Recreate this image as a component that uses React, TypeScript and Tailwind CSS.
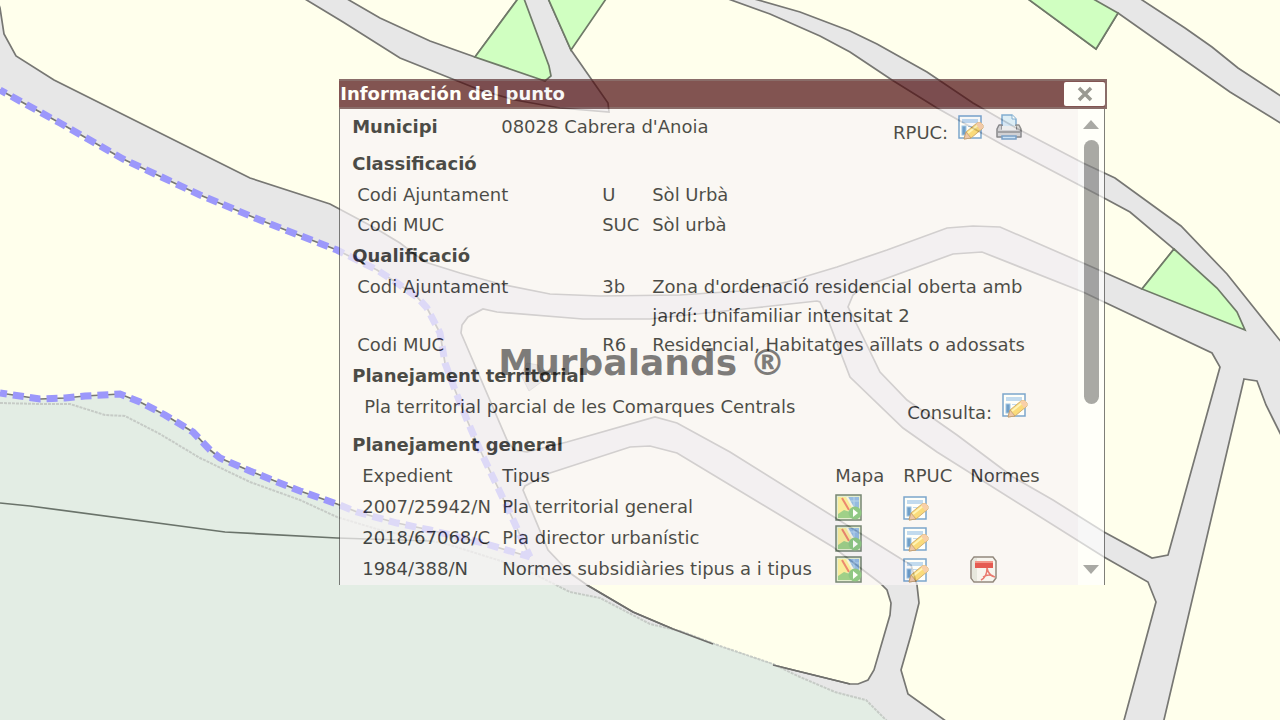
import React from 'react';

const PARCELS = [
  'M-4 -4L0 8L4 34L16 56L54 80L250 178L330 204L375 228L400 243L425 262L460 273L500 284L550 294L600 296L680 295L740 291L787 282L837 267L887 250L947 228L973 226L1000 227L1083 263L1142 289L1174 249L1130 212L1104 198L1083 187L1003 145L937 108L892 80L850 52L820 36L770 14L720 -4H547L571 50L608 103L609 112L560 108L515 100L480 90L430 70L400 58L343 22L300 -4Z',
  'M342 -4L380 18L430 41L475 57L520 -4Z',
  'M744 -4L800 12L850 31L877 44L927 72L973 103L1018 129L1083 163L1115 178L1181 226L1227 274L1282 343V124L1230 92L1118 13L1096 49L1024 -4Z',
  'M1136 -4L1185 28L1212 47L1238 68L1284 98V-4Z',
  'M1104 302L1212 353L1220 367L1168 555L1152 558L1104 532L1053 500L1013 477L957 435L907 400L880 372L863 337L848 307L853 295L863 287L953 254L982 252L1083 292Z',
  'M820 302L827 317L850 377L903 428L937 452L1104 557L1148 582L1156 602L1123 724H950L908 694L901 670L911 635L919 603L917 585L911 565L890 552L730 452L677 423L655 417L567 442L527 452L514 450L507 440L461 333L462 325L468 317L483 309L497 312L583 319L650 319L753 308L817 301Z',
  'M550 473L630 447L650 446L677 453L730 485L833 547L880 583L887 590L891 603L890 615L874 670L868 680L858 684L850 684L773 665L720 647L673 629L633 612L587 585L570 573L548 550L523 490L525 486Z',
  'M1244 379L1257 381L1266 405L1284 441V724H1163Z',
];

const GREENS = [
  'M520 -4L475 57L545 81L551 76L549 66L523 -4Z',
  'M547 -4L571 50L608 -4Z',
  'M1024 -4L1096 49L1118 13L1088 -4Z',
  'M1174 249L1217 288L1237 312L1245 330L1142 289Z',
];

const BOUNDARY_NORTH =
  'M0 90L60 123L123 159L200 195L260 220L337 250L377 270L397 283L417 297L427 308L440 333L445 363L455 390L467 420L480 450L510 513L530 557';
const BOUNDARY_SOUTH =
  'M0 393L40 399L65 398L85 396L120 394L140 402L165 415L193 432L210 450L220 458L250 471L300 491L337 504L357 512L397 523L430 530L483 543L530 557';
const PATH_TRACK =
  'M0 403L40 404L70 404L105 415L125 416L160 434L200 458L250 482L300 500L337 517L380 530L450 545L520 567L570 592L600 598L650 624L680 631L720 646L773 664L800 677L835 692L866 700L888 722';

const MapCanvas: React.FC = () => (
  <svg
    className="absolute inset-0 h-full w-full"
    viewBox="0 0 1280 720"
    preserveAspectRatio="xMidYMid slice"
    aria-hidden="true"
  >
    <rect width="1280" height="720" fill="#e7e7e7" />
    {PARCELS.map(d => (
      <path key={d} d={d} fill="#ffffec" stroke="#777773" strokeWidth="1.7" />
    ))}
    {GREENS.map(d => (
      <path key={d} d={d} fill="#d0ffc1" stroke="#6f7a68" strokeWidth="1.7" />
    ))}
    {/* parcel between the two stretches of municipal boundary */}
    <path d="M0 90L60 123L123 159L200 195L260 220L337 250L377 270L417 297L427 308L440 333L445 363L467 420L480 450L510 513L530 557L483 543L430 530L397 523L337 504L300 491L220 458L193 432L140 402L120 394L40 399L0 393Z" fill="#ffffec" />
    <path
      d="M0 393L40 399L120 394L140 402L193 432L220 458L300 491L337 504L397 523L483 543L520 567L570 592L600 598L650 624L680 631L720 646L773 664L800 677L835 692L866 700L888 722H0Z"
      fill="#e3ede4"
    />
    <path d={PATH_TRACK} fill="none" stroke="#c6cbc6" strokeWidth="2" strokeDasharray="3 1" />
    <path d="M0 503L30 506L225 532L337 538L430 541" fill="none" stroke="#6a736a" strokeWidth="1.7" />
    <path d="M587 585L633 612L673 629L713 644M773 665L850 684" fill="none" stroke="#6f6f6c" strokeWidth="1.7" />
    {[BOUNDARY_NORTH, BOUNDARY_SOUTH].map(d => (
      <g key={d} fill="none">
        <path d={d} stroke="#777773" strokeWidth="1.7" />
        <path d={d} stroke="#9c98fb" strokeWidth="7" strokeDasharray="11 6" strokeDashoffset="4" />
      </g>
    ))}
    <path d="M521 375L529 391L544 380L538 365L527 363Z" fill="#cfcfcb" stroke="#aaa" />
  </svg>
);

const SheetIcon: React.FC = () => (
  <svg className="h-[26px] w-[26px]" viewBox="0 0 26 26" aria-hidden="true">
    <rect x="1" y="2" width="22" height="22" fill="#fff" stroke="#4481bf" strokeWidth="1.5" />
    <rect x="4" y="5" width="16" height="4" fill="#a9cdf0" />
    <rect x="4" y="12" width="4" height="9" fill="#3577b8" stroke="#78aee0" />
    <path d="M10 12.500H19" stroke="#a9cdf0" />
    <path d="M6 25L8 18L19 9Q23 7 25 11V14L13 24Z" fill="#f8cc4a" stroke="#c08f3c" />
    <path d="M10 19L20 11" stroke="#fff0a0" strokeWidth="2" />
    <path d="M19 9Q23 7 25 11V14L22 16L18 10Z" fill="#f7bd8c" />
    <path d="M6 25L8 18L13 24Z" fill="#e9b28a" stroke="#9c6c3c" strokeWidth="0.7" />
  </svg>
);

const PrinterIcon: React.FC = () => (
  <svg className="h-[26px] w-[26px]" viewBox="0 0 26 26" aria-hidden="true">
    <path d="M6 13V1H16L20 5V13Z" fill="#cfe7fa" stroke="#4d8cc5" strokeWidth="1.5" />
    <path d="M16 1V5H20" fill="#fff" stroke="#4d8cc5" />
    <path d="M3 11H6V15H20V11H23L25 15V23H1V15Z" fill="#c9c9cc" stroke="#606065" strokeWidth="1.5" strokeLinejoin="round" />
    <rect x="6" y="12" width="14" height="4" fill="#f0f0f0" />
    <path d="M2 18H24" stroke="#85858a" strokeWidth="2" />
    <path d="M6 22H20V25H6Z" fill="#c0e0fb" stroke="#4b83bb" strokeWidth="1.5" />
  </svg>
);

const MapIcon: React.FC = () => (
  <svg className="h-[27px] w-[27px]" viewBox="0 0 27 27" aria-hidden="true">
    <rect x="1" y="1" width="25" height="25" fill="#d9e8c4" stroke="#3e5440" strokeWidth="1.5" />
    <path d="M3 3H12L17 14L9 19L3 21Z" fill="#f7e578" />
    <path d="M13 3H24V14H18Z" fill="#6b9fdb" />
    <path d="M15 7H24M19 3V13" stroke="#9cc3ea" />
    <path d="M12 3L20 17" stroke="#f3eedc" strokeWidth="2" />
    <path d="M7 4L14 16" stroke="#e5583a" strokeWidth="2" />
    <path d="M3 24V20L9 16L15 18L18 24Z" fill="#79bd5e" />
    <circle cx="20" cy="19" r="6.500" fill="#62b257" />
    <path d="M18 15L23 19L18 23Z" fill="#fff" />
  </svg>
);

const PdfIcon: React.FC = () => (
  <svg className="h-[27px] w-[27px]" viewBox="0 0 27 27" aria-hidden="true">
    <path d="M4 1H23L26 5V22L23 26H4L1 22V5Z" fill="#f4f2ef" stroke="#65574f" strokeWidth="1.5" />
    <path d="M4 2H7V25H4L2 22V5Z" fill="#deded8" />
    <path d="M5 5H23V12H5Z" fill="#db1712" />
    <path d="M5 5H23V7H5Z" fill="#ef6a60" />
    <path d="M17 12C18 17 20 20 25 21M17 12C17 17 15 22 11 24M13 21Q19 17 25 21" fill="none" stroke="#e0433b" strokeWidth="1.5" />
  </svg>
);

interface LinkProps {
  label: string;
  children: React.ReactNode;
}

const IconLink: React.FC<LinkProps> = ({ label, children }) => (
  <a href="#" aria-label={label} className="inline-block align-middle">
    {children}
  </a>
);

const Heading: React.FC<{ children: React.ReactNode }> = ({ children }) => (
  <h3 className="pl-3 font-bold leading-8">{children}</h3>
);

interface CodeRowProps {
  label: string;
  code: string;
  text: string;
}

const CodeRow: React.FC<CodeRowProps> = ({ label, code, text }) => (
  <div className="grid min-h-[30px] grid-cols-[245px_50px_1fr] pl-[17px] pr-10 leading-[29px]">
    <dt>{label}</dt>
    <dd>{code}</dd>
    <dd>{text}</dd>
  </div>
);

const PLANS = [
  { id: '2007/25942/N', type: 'Pla territorial general', rules: false },
  { id: '2018/67068/C', type: 'Pla director urbanístic', rules: false },
  { id: '1984/388/N', type: 'Normes subsidiàries tipus a i tipus', rules: true },
];

const PointInfo: React.FC = () => (
  <section className="absolute left-[26.5%] top-[79px] w-3/5 min-w-[768px] text-lg text-black opacity-70">
    <header className="flex h-[30px] items-center justify-between border-2 border-l-0 border-[#5a3032] bg-[#4e0d10]">
      <h2 className="pl-px font-bold text-white">Información del punto</h2>
      <button type="button" aria-label="Tancar" className="flex h-6 w-[41px] items-center justify-center rounded-xs bg-white">
        <svg className="h-4 w-4" viewBox="0 0 16 16" aria-hidden="true">
          <path d="M2 2L14 14M14 2L2 14" stroke="#70706c" strokeWidth="3.5" />
        </svg>
      </button>
    </header>

    <div className="mr-[2px] flex overflow-hidden border-x border-[#4a4a48] bg-[#f9f5f6]">
      <div className="grow pb-px pt-[3px]">
        <div className="flex items-start pl-3 leading-[30px]">
          <h3 className="w-[149px] font-bold">Municipi</h3>
          <p className="grow">08028 Cabrera d'Anoia</p>
          <div className="flex gap-2.5 pr-14">
            <span className="pt-1.5">RPUC:</span>
            <div className="flex gap-3 pt-[2px]">
              <IconLink label="RPUC"><SheetIcon /></IconLink>
              <IconLink label="Imprimir"><PrinterIcon /></IconLink>
            </div>
          </div>
        </div>

        <Heading>Classificació</Heading>
        <dl>
          <CodeRow label="Codi Ajuntament" code="U" text="Sòl Urbà" />
          <CodeRow label="Codi MUC" code="SUC" text="Sòl urbà" />
        </dl>

        <Heading>Qualificació</Heading>
        <dl>
          <CodeRow label="Codi Ajuntament" code="3b" text="Zona d'ordenació residencial oberta amb jardí: Unifamiliar intensitat 2" />
          <CodeRow label="Codi MUC" code="R6" text="Residencial, Habitatges aïllats o adossats" />
        </dl>

        <Heading>Planejament territorial</Heading>
        <div className="flex h-[37px] items-start justify-between pl-6 pr-[50px] leading-[30px]">
          <p>Pla territorial parcial de les Comarques Centrals</p>
          <div className="flex items-start gap-2.5">
            <span className="pt-1.5">Consulta:</span>
            <IconLink label="Consulta"><SheetIcon /></IconLink>
          </div>
        </div>

        <Heading>Planejament general</Heading>
        <table className="ml-[22px] table-fixed text-left">
          <colgroup>
            <col className="w-[140px]" />
            <col className="w-[333px]" />
            <col className="w-[68px]" />
            <col className="w-[67px]" />
            <col className="w-[80px]" />
          </colgroup>
          <thead>
            <tr className="h-[30px] [&>th]:font-normal">
              <th>Expedient</th>
              <th>Tipus</th>
              <th>Mapa</th>
              <th>RPUC</th>
              <th>Normes</th>
            </tr>
          </thead>
          <tbody>
            {PLANS.map(plan => (
              <tr key={plan.id} className="h-[31px] leading-[30px]">
                <td>{plan.id}</td>
                <td>{plan.type}</td>
                <td><IconLink label="Mapa"><MapIcon /></IconLink></td>
                <td><IconLink label="RPUC"><SheetIcon /></IconLink></td>
                <td>{plan.rules && <IconLink label="Normes"><PdfIcon /></IconLink>}</td>
              </tr>
            ))}
          </tbody>
        </table>
      </div>

      <div className="flex w-[26px] shrink-0 flex-col items-center bg-white py-[11px]">
        <button type="button" aria-label="Amunt" className="border-x-8 border-b-9 border-x-transparent border-b-[#868686]" />
        <div className="mt-[11px] h-[264px] w-[15px] rounded-full bg-[#868686]" />
        <button type="button" aria-label="Avall" className="mt-auto border-x-8 border-t-9 border-x-transparent border-t-[#868686]" />
      </div>
    </div>
  </section>
);

const App: React.FC = () => (
  <main className="relative min-h-screen overflow-hidden bg-[#ffffec] font-['DejaVu_Sans',Verdana,sans-serif]">
    <MapCanvas />
    <PointInfo />
    <div className="pointer-events-none absolute inset-0 flex items-center justify-center pl-1 pt-1.5 text-4xl font-bold text-black/50">
      Murbalands ®
    </div>
  </main>
);

export default App;
